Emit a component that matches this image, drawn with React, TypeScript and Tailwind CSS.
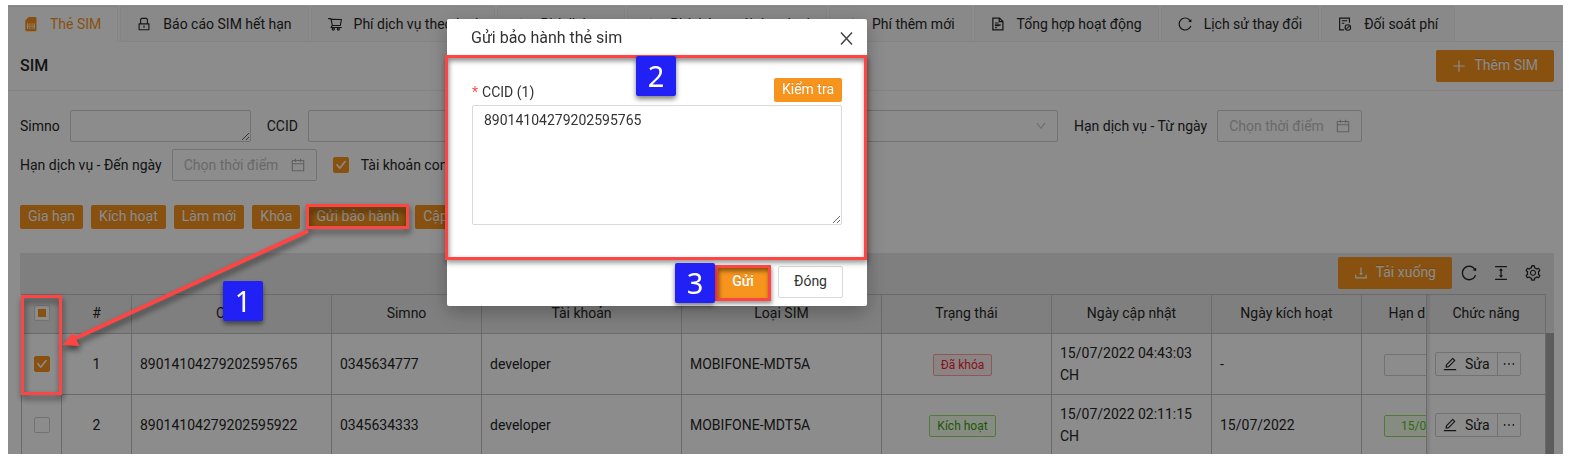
import React from "react";
import {
  AiOutlineCalendar,
  AiOutlineCheck,
  AiOutlineColumnHeight,
  AiOutlineDown,
  AiOutlineDownload,
  AiOutlineEdit,
  AiOutlineEllipsis,
  AiOutlineLock,
  AiOutlinePlus,
  AiOutlineReload,
  AiOutlineSetting,
  AiOutlineShoppingCart,
  AiOutlineUpload,
} from "react-icons/ai";

function SimIcon() {
  return (
    <svg viewBox="0 0 14 14" width="16" height="16" fill="none" aria-hidden="true">
      <path d="M5 0.8H10.8a1 1 0 0 1 1 1v10.6a1 1 0 0 1-1 1H3a1 1 0 0 1-1-1V3.8z" fill="#f7941d" />
      <path d="M4 6.4v5M4 8.9H9.9M9.9 6.4v5M5.9 6.4v1.4M8 6.4v1.4M5.9 10v1.4M8 10v1.4" stroke="#fff" strokeWidth="0.8" />
    </svg>
  );
}

function SummaryIcon() {
  return (
    <svg viewBox="0 0 14 14" width="16" height="16" fill="none" stroke="currentColor" aria-hidden="true">
      <path d="M2.5 1.8H8.3L11.3 4.8V12.2H2.5Z" strokeWidth="1.1" />
      <path d="M8.1 1.8V5H11.3" strokeWidth="1.1" />
      <path d="M4.3 6.2H7.6M4.3 10.2H6.2M7.8 7.8H9.6" strokeWidth="0.9" />
      <path d="M4.3 8.1H8.4" strokeWidth="1.6" />
    </svg>
  );
}

function AuditIcon() {
  return (
    <svg viewBox="0 0 14 14" width="16" height="16" fill="none" stroke="currentColor" aria-hidden="true">
      <path d="M10.9 6V1.8H2.3V12.2H6.2" strokeWidth="1" />
      <path d="M4.2 4.2H9M4.2 6.4H6.4" strokeWidth="0.9" />
      <circle cx="9.5" cy="10.1" r="2.4" strokeWidth="1" />
      <path d="M8 11.6L11 8.6" strokeWidth="0.9" />
    </svg>
  );
}

const tabs = [
  { label: "Thẻ SIM", icon: <SimIcon /> },
  { label: "Báo cáo SIM hết hạn", icon: <AiOutlineLock /> },
  { label: "Phí dịch vụ theo loại", icon: <AiOutlineShoppingCart /> },
  { label: "Phí dịch vụ", icon: <AiOutlineUpload /> },
  { label: "Phí thêm mới theo loại", icon: <AiOutlineUpload /> },
  { label: "Phí thêm mới", icon: <AiOutlineUpload /> },
  { label: "Tổng hợp hoạt động", icon: <SummaryIcon /> },
  { label: "Lịch sử thay đổi", icon: <AiOutlineReload /> },
  { label: "Đối soát phí", icon: <AuditIcon /> },
];

const actions = ["Gia hạn", "Kích hoạt", "Làm mới", "Khóa", "Gửi bảo hành", "Cập nhật"];

const rows = [
  {
    id: 1,
    checked: true,
    ccid: "89014104279202595765",
    simno: "0345634777",
    status: "Đã khóa",
    locked: true,
    updated: "15/07/2022 04:43:03 CH",
    activated: "-",
    expiry: "",
  },
  {
    id: 2,
    checked: false,
    ccid: "89014104279202595922",
    simno: "0345634333",
    status: "Kích hoạt",
    locked: false,
    updated: "15/07/2022 02:11:15 CH",
    activated: "15/07/2022",
    expiry: "15/07/2023",
  },
];

function Checkbox({ id, label, checked, mixed }: { id?: string; label?: string; checked?: boolean; mixed?: boolean }) {
  return (
    <span className="relative inline-flex size-4 shrink-0">
      <input
        id={id}
        type="checkbox"
        aria-label={label}
        defaultChecked={checked}
        className="size-4 appearance-none rounded-xs border border-[#d0d0d0] bg-white checked:border-[#f7941d] checked:bg-[#f7941d]"
      />
      {checked && (
        <AiOutlineCheck className="pointer-events-none absolute inset-0 m-auto size-3 stroke-[60] text-white" stroke="currentColor" />
      )}
      {mixed && <span className="pointer-events-none absolute inset-0 m-auto size-2 bg-[#f7941d]" />}
    </span>
  );
}

function PrimaryButton({ icon, children }: { icon?: React.ReactNode; children: React.ReactNode }) {
  return (
    <button
      type="button"
      className="flex h-8 items-center gap-2 rounded-xs bg-[#f7941d] px-4 text-white [text-shadow:0_-1px_0_rgba(0,0,0,0.12)] [&>svg]:-mx-px"
    >
      {icon}
      <span className="-mt-0.5">{children}</span>
    </button>
  );
}

function DateField({ id, label }: { id: string; label: string }) {
  return (
    <div className="flex items-center gap-2.5">
      <label htmlFor={id}>{label}</label>
      <div className="flex h-8 w-[145px] items-center rounded-xs border border-[#d0d0d0] bg-white pr-2.5 pl-[11px]">
        <input id={id} type="text" placeholder="Chọn thời điểm" className="min-w-0 flex-1 placeholder:text-[#bfbfbf]" />
        <AiOutlineCalendar className="size-4 text-[#b0b0b0]" />
      </div>
    </div>
  );
}

const th = "h-[39px] border-r border-b border-[#c1c1c1] bg-[#e8e8e8] px-2 pb-0.5 text-center font-normal";
const td = "h-[61px] border-r border-b border-[#c1c1c1] bg-white px-2";
const pinned = " sticky right-0 border-l shadow-[inset_4px_0_2px_-1px_rgba(0,0,0,0.08)]";
const tag = "mr-2 inline-block h-[22px] rounded-xs border px-[7px] text-xs leading-5";
const marker =
  "absolute flex size-10 items-center justify-center rounded-xs bg-[#2121f5] pb-0.5 font-['Noto_Sans',sans-serif] text-[29px] leading-none text-white shadow-[0_3px_5px_rgba(0,0,0,0.5)]";

function SimTable() {
  return (
    <div className="flex">
      <div className="ml-px min-w-0 flex-1 overflow-hidden">
        <table className="w-[1612px] table-fixed border-separate border-spacing-0 border-t border-l border-[#c1c1c1]">
          <colgroup>
            <col className="w-10" />
            <col className="w-[70px]" />
            <col className="w-[200px]" />
            <col className="w-[150px]" />
            <col className="w-[200px]" />
            <col className="w-[200px]" />
            <col className="w-[170px]" />
            <col className="w-[160px]" />
            <col className="w-[150px]" />
            <col />
            <col className="w-[120px]" />
          </colgroup>
          <thead>
            <tr>
              <th className={th}>
                <span className="flex justify-center">
                  <Checkbox label="Chọn tất cả" mixed />
                </span>
              </th>
              <th className={th}>#</th>
              <th className={th}>CCID</th>
              <th className={th}>Simno</th>
              <th className={th}>Tài khoản</th>
              <th className={th}>Loại SIM</th>
              <th className={th}>Trạng thái</th>
              <th className={th}>Ngày cập nhật</th>
              <th className={th}>Ngày kích hoạt</th>
              <th className={th + " whitespace-nowrap"}>
                <span className="inline-block pr-6">Hạn dịch vụ</span>
              </th>
              <th className={th + pinned}>Chức năng</th>
            </tr>
          </thead>
          <tbody>
            {rows.map((r) => (
              <tr key={r.id}>
                <td className={td}>
                  <span className="flex justify-center">
                    <Checkbox label={`Chọn dòng ${r.id}`} checked={r.checked} />
                  </span>
                </td>
                <td className={td + " text-center"}>{r.id}</td>
                <td className={td}>{r.ccid}</td>
                <td className={td}>{r.simno}</td>
                <td className={td}>developer</td>
                <td className={td}>MOBIFONE-MDT5A</td>
                <td className={td + " text-center"}>
                  <span
                    className={
                      r.locked
                        ? tag + " border-[#ffa39e] bg-[#fff1f0] text-[#f5222d]"
                        : tag + " border-[#95de64] bg-[#f6ffed] text-[#389e0d]"
                    }
                  >
                    {r.status}
                  </span>
                </td>
                <td className={td}>{r.updated}</td>
                <td className={td}>{r.activated}</td>
                <td className={td + " text-center"}>
                  <span
                    className={
                      r.expiry
                        ? tag + " w-[98px] border-[#95de64] bg-[#f6ffed] align-middle text-[#52c41a]"
                        : tag + " w-[98px] border-[#d0d0d0] bg-white align-middle"
                    }
                  >
                    {r.expiry}
                  </span>
                </td>
                <td className={td + pinned}>
                  <div className="flex">
                    <button type="button" className="flex h-6 items-center gap-2 rounded-l-xs border border-[#d0d0d0] px-[7px]">
                      <AiOutlineEdit className="-mx-px size-4" />
                      Sửa
                    </button>
                    <button
                      type="button"
                      aria-label="Thêm thao tác"
                      className="-ml-px flex h-6 w-6 items-center justify-center rounded-r-xs border border-[#d0d0d0]"
                    >
                      <AiOutlineEllipsis className="size-4 shrink-0" />
                    </button>
                  </div>
                </td>
              </tr>
            ))}
          </tbody>
        </table>
      </div>
      <div className="flex w-2 flex-col">
        <div className="h-[39px] bg-[#e8e8e8]" />
        <div className="flex-1 bg-[#a8a8a8]" />
      </div>
    </div>
  );
}

function WarrantyDialog() {
  return (
    <div
      role="dialog"
      aria-label="Gửi bảo hành thẻ sim"
      className="absolute top-3.5 left-[439px] w-[420px] rounded-xs bg-white text-[#333] shadow-[0_6px_20px_rgba(0,0,0,0.28)]"
    >
      <div className="flex h-9 items-center justify-between pt-0.5 pr-3.5 pl-6">
        <h2 className="text-base">Gửi bảo hành thẻ sim</h2>
        <button type="button" aria-label="Đóng hộp thoại">
          <svg width="13" height="13" viewBox="0 0 13 13" fill="none" stroke="#444" strokeWidth="1.5" aria-hidden="true">
            <path d="M1 0.5L12 12.5M12 0.5L1 12.5" />
          </svg>
        </button>
      </div>
      <div className="relative h-[205px] px-[25px] pt-[23px]">
        <div className="flex items-start justify-between">
          <label htmlFor="warranty-ccid" className="pt-[3px]">
            <span className="mr-1 text-[#ff4d4f]">*</span>
            CCID (1)
          </label>
          <button
            type="button"
            className="h-6 rounded-xs bg-[#f7941d] px-2 pb-0.5 leading-[22px] text-white [text-shadow:0_-1px_0_rgba(0,0,0,0.12)]"
          >
            Kiểm tra
          </button>
        </div>
        <textarea
          id="warranty-ccid"
          defaultValue="89014104279202595765"
          className="mt-0.5 block h-[120px] w-full rounded-xs border border-[#d9d9d9] px-[11px] py-[3px]"
        />
        <div className="pointer-events-none absolute inset-y-0 right-0 -left-0.5 border-[3px] border-[#ff4444] shadow-[inset_1px_3px_5px_rgba(0,0,0,0.45),1px_3px_5px_rgba(0,0,0,0.4)]" />
        <span className={marker + " top-px left-[189px]"}>2</span>
      </div>
      <div className="flex h-[46px] items-start justify-end gap-2 pt-1.5 pr-6">
        <div className="relative">
          <button
            type="button"
            className="h-8 w-[54px] rounded-xs bg-[#f7941d] pb-0.5 font-medium text-white [text-shadow:0_-1px_0_rgba(0,0,0,0.12)]"
          >
            Gửi
          </button>
          <div className="pointer-events-none absolute -inset-x-px -top-px -bottom-[3px] border-[3px] border-[#ff4444] shadow-[inset_1px_3px_4px_rgba(0,0,0,0.45),1px_3px_4px_rgba(0,0,0,0.4)]" />
          <span className={marker + " -top-[3px] right-[55px]"}>3</span>
        </div>
        <button type="button" className="h-8 rounded-xs border border-[#d9d9d9] bg-white px-[15px] pb-0.5">
          Đóng
        </button>
      </div>
    </div>
  );
}

function StepAnnotations() {
  return (
    <div className="pointer-events-none absolute top-0 left-0">
      <svg width="440" height="420" viewBox="0 0 440 420" fill="none" className="drop-shadow-[1px_4px_3px_rgba(0,0,0,0.6)]" aria-hidden="true">
        <rect x="299.5" y="200.5" width="100" height="22" stroke="#ff4444" strokeWidth="3" />
        <rect x="14.5" y="291.5" width="38" height="97" stroke="#ff4444" strokeWidth="3" />
        <path d="M300 226L68 333" stroke="#ff4444" strokeWidth="4" />
        <path d="M54.5 340L65 327.5L71.5 341Z" fill="#ff4444" />
      </svg>
      <span className={marker + " top-[276px] left-[215px]"}>1</span>
    </div>
  );
}

export default function App() {
  return (
    <div className="h-screen bg-white pt-[5px] pr-1.5 pb-1.5 pl-2 font-[Roboto,'Noto_Sans',sans-serif] text-sm leading-[22px] text-[#262626]">
      <div className="relative h-full overflow-hidden">
        <nav className="flex h-[37px] gap-0.5 border-b border-[#f0f0f0] bg-white pt-px">
          {tabs.map((t, i) => (
            <a
              key={t.label}
              href="#"
              className={
                i === 0
                  ? "-mb-px -ml-px flex items-center gap-3 rounded-t-xs border border-b-0 border-[#f0f0f0] bg-white px-4 pb-0.5 whitespace-nowrap text-[#f7941d] [&>svg]:-mx-px [&>svg]:size-4"
                  : "flex items-center gap-3 rounded-t-xs border border-b-0 border-[#f0f0f0] bg-[#fafafa] px-4 pb-px whitespace-nowrap [&>svg]:-mx-px [&>svg]:size-4"
              }
            >
              {t.icon}
              <span>{t.label}</span>
            </a>
          ))}
        </nav>

        <header className="flex h-[49px] items-center justify-between border-b border-[#f0f0f0] pr-[9px] pl-3">
          <h1 className="text-base font-medium">SIM</h1>
          <PrimaryButton icon={<AiOutlinePlus className="size-4" />}>Thêm SIM</PrimaryButton>
        </header>

        <main className="pr-[9px] pl-3">
          <form className="flex flex-wrap gap-x-4 gap-y-[7px] pt-[19px]">
            <div className="flex items-center gap-2.5">
              <label htmlFor="simno">Simno</label>
              <textarea id="simno" className="block h-8 w-[181px] rounded-xs border border-[#d0d0d0] bg-white" />
            </div>
            <div className="flex items-center gap-2.5">
              <label htmlFor="ccid">CCID</label>
              <textarea id="ccid" className="block h-8 w-[181px] rounded-xs border border-[#d0d0d0] bg-white" />
            </div>
            <div className="flex w-[553px] items-center gap-2.5">
              <label htmlFor="status">Trạng thái</label>
              <div className="relative flex-1">
                <select id="status" className="block h-8 w-full appearance-none rounded-xs border border-[#d0d0d0] bg-white" />
                <AiOutlineDown className="pointer-events-none absolute top-2.5 right-[11px] size-3 text-[#bfbfbf]" />
              </div>
            </div>
            <DateField id="from" label="Hạn dịch vụ - Từ ngày" />
            <DateField id="to" label="Hạn dịch vụ - Đến ngày" />
            <div className="flex items-center gap-3">
              <Checkbox id="children" checked />
              <label htmlFor="children">Tài khoản con</label>
            </div>
          </form>

          <div className="flex gap-2 pt-6">
            {actions.map((a) => (
              <button
                key={a}
                type="button"
                className="h-6 rounded-xs bg-[#f7941d] px-2 pb-0.5 leading-[22px] text-white [text-shadow:0_-1px_0_rgba(0,0,0,0.12)]"
              >
                {a}
              </button>
            ))}
          </div>

          <section className="mt-6">
            <div className="flex h-[41px] items-center justify-end gap-2 bg-[#e8e8e8] pr-3 pb-px">
              <PrimaryButton icon={<AiOutlineDownload className="size-4" />}>Tải xuống</PrimaryButton>
              <div className="flex gap-3.5">
                <button type="button" aria-label="Tải lại">
                  <AiOutlineReload className="size-[18px]" />
                </button>
                <button type="button" aria-label="Mật độ">
                  <AiOutlineColumnHeight className="size-[18px]" />
                </button>
                <button type="button" aria-label="Cài đặt cột">
                  <AiOutlineSetting className="size-[18px]" />
                </button>
              </div>
            </div>
            <SimTable />
          </section>
        </main>

        <div className="absolute inset-0 bg-black/45" />
        <StepAnnotations />
        <WarrantyDialog />
      </div>
    </div>
  );
}
